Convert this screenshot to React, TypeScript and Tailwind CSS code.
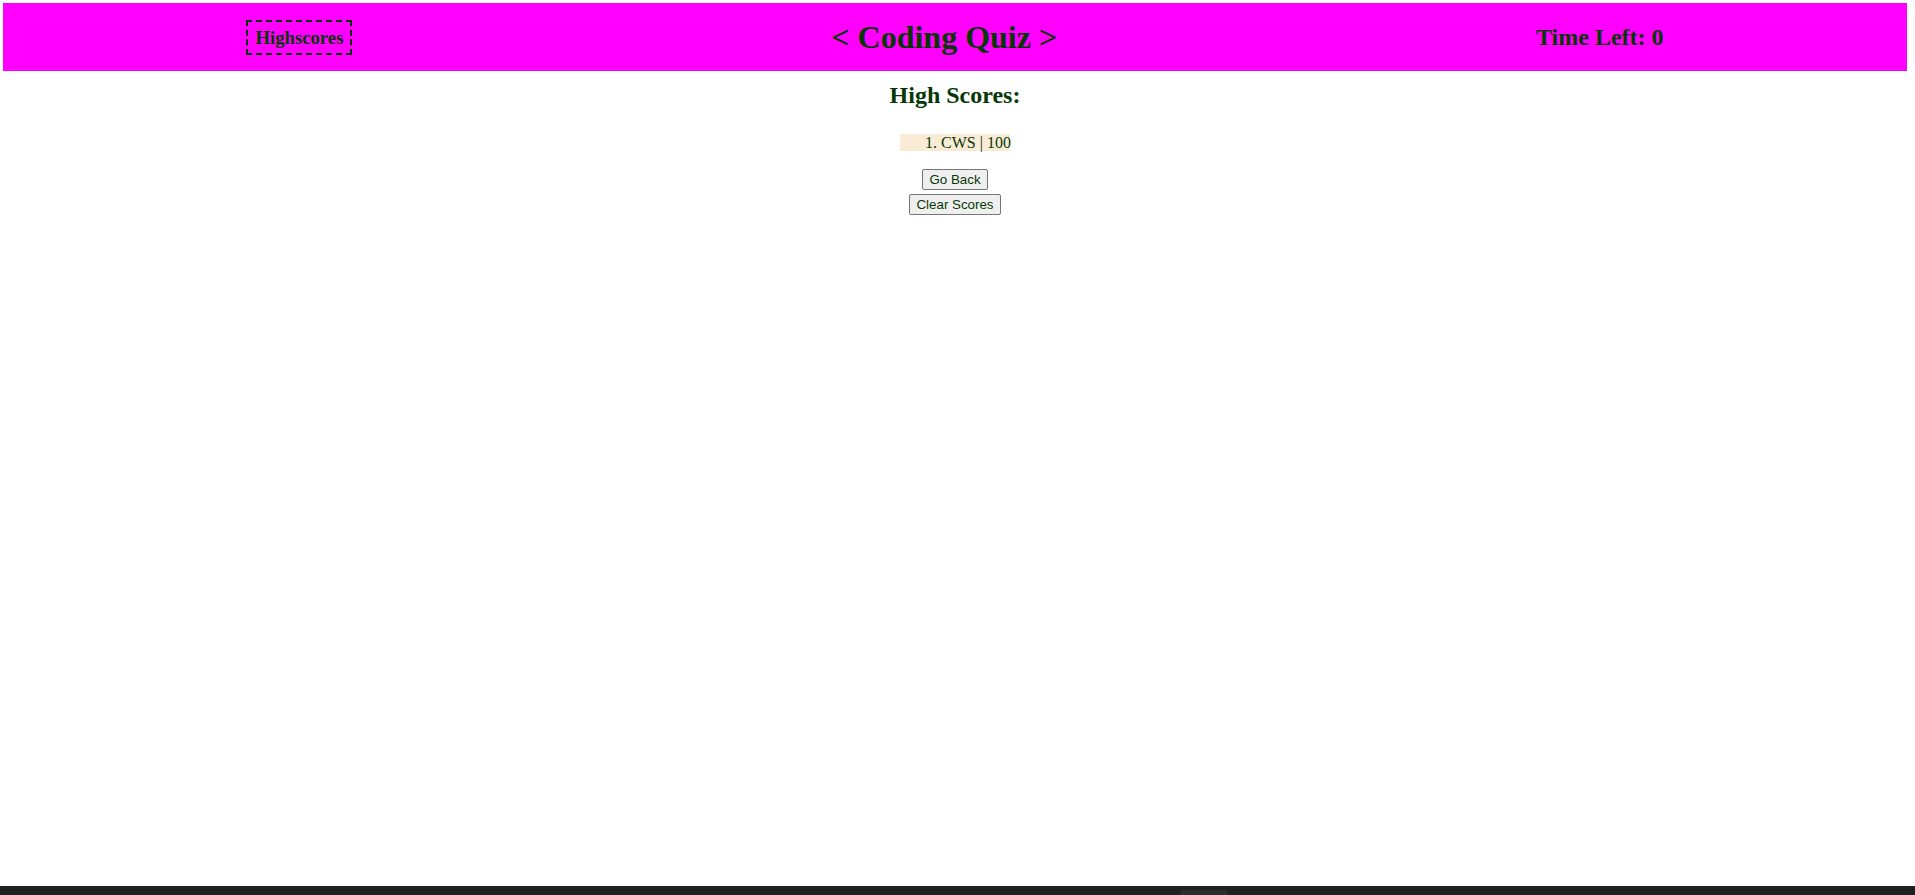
import React from 'react';

const scores = [{ initials: 'CWS', score: 100 }];

export default function App() {
  return (
    <div className="min-h-screen flex flex-col bg-white text-[#063806] font-['Liberation_Serif',serif]">
      <div className="flex-1 pl-[3px] pr-[8px] pt-[3px]">
        <header className="h-[68px] bg-[#ff00ff] flex items-center justify-around">
          <div className="ml-[4px] border-2 border-dashed border-[#063806] px-[7px] py-[5px] text-[18.72px] font-bold leading-[21px] cursor-pointer">
            Highscores
          </div>
          <h1 className="text-[32px] font-bold leading-[37px]">&lt; Coding Quiz &gt;</h1>
          <h2 className="mr-[4px] text-[24px] font-bold leading-[28px]">Time Left: 0</h2>
        </header>

        <main className="flex flex-col items-center">
          <h2 className="mt-[10px] text-[24px] font-bold leading-[28px]">High Scores:</h2>

          <ol className="mt-[25px]">
            {scores.map((s, i) => (
              <li
                key={s.initials}
                className="w-[110px] h-[17px] pl-[25px] bg-[#faebd7] text-[16px] leading-[17px] whitespace-nowrap"
              >
                {i + 1}. {s.initials} | {s.score}
              </li>
            ))}
          </ol>

          <button className="mt-[18px] h-[21px] px-[6px] bg-[#efefef] border border-[#767676] rounded-[2px] text-[13.33px] leading-[17px] font-['Liberation_Sans',Arial,sans-serif]">
            Go Back
          </button>
          <button className="mt-[4px] h-[21px] px-[6px] bg-[#efefef] border border-[#767676] rounded-[2px] text-[13.33px] leading-[17px] font-['Liberation_Sans',Arial,sans-serif]">
            Clear Scores
          </button>
        </main>
      </div>

      <div className="h-[9px] bg-[#202020] flex items-end">
        <div className="ml-[1180px] w-[48px] h-[5px] rounded-t-[5px] bg-[#2e2e2e]" />
      </div>
    </div>
  );
}
